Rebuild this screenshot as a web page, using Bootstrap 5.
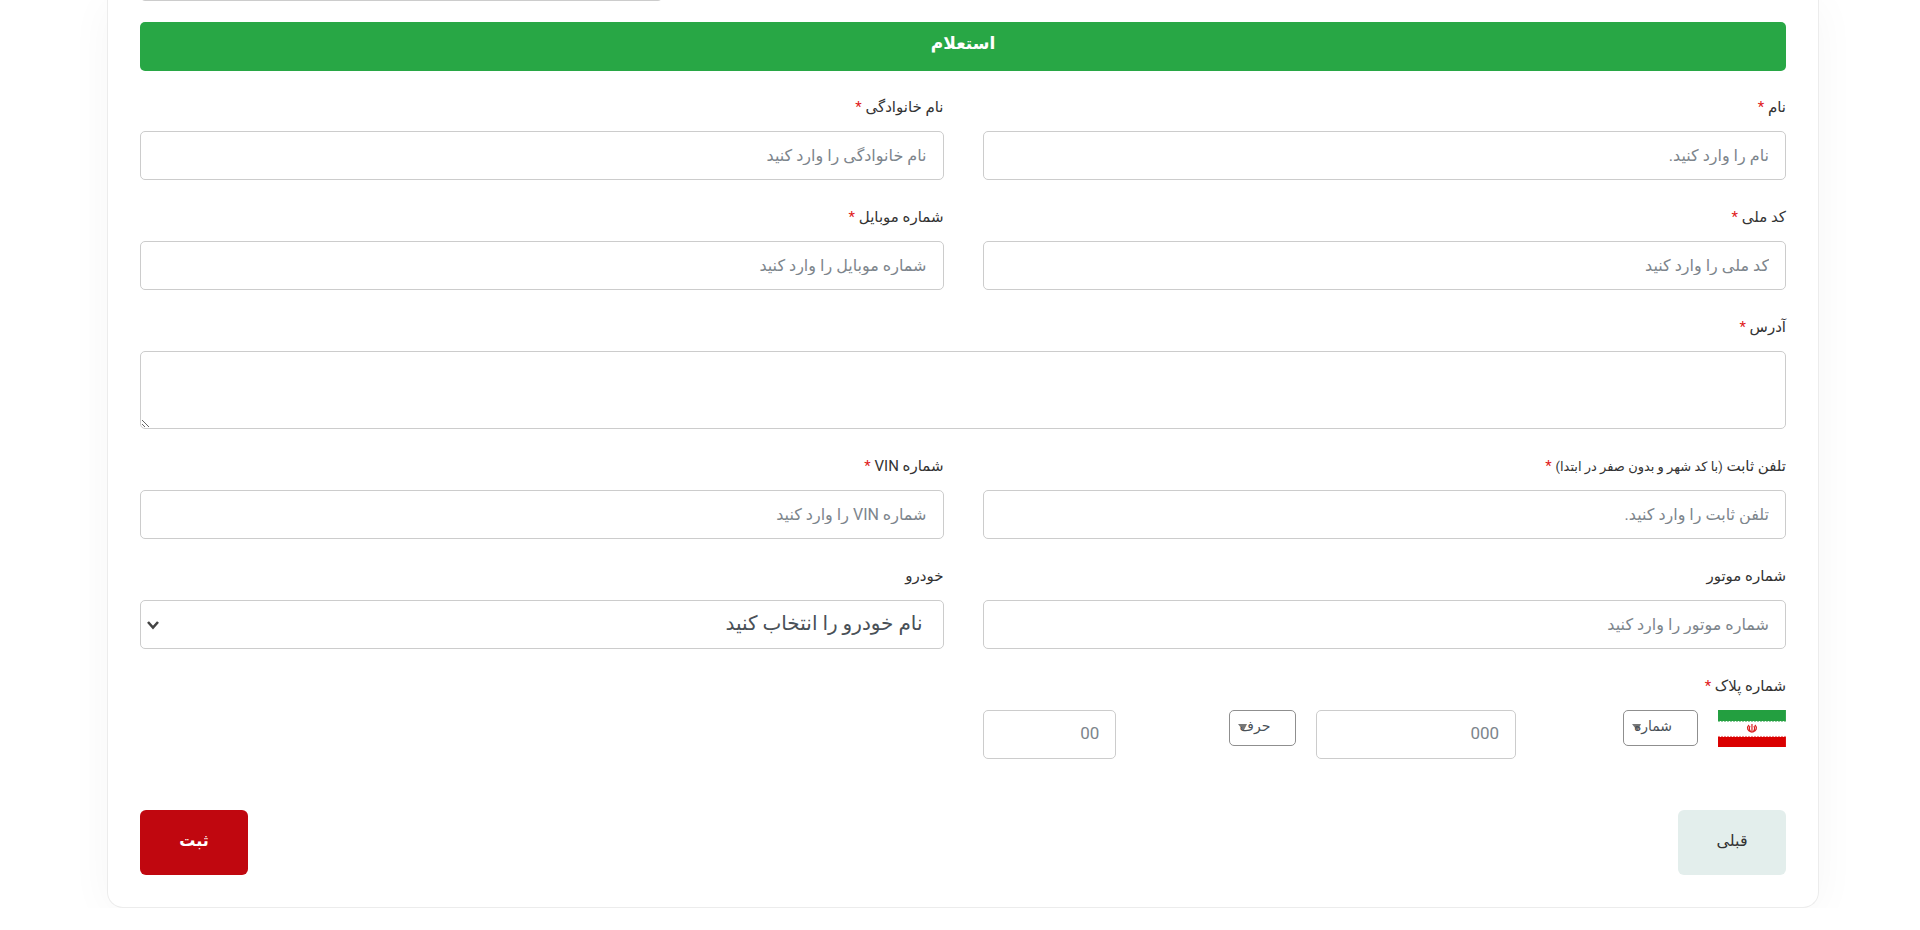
<!DOCTYPE html>
<html lang="fa" dir="rtl">
<head>
<meta charset="utf-8">
<meta name="viewport" content="width=device-width, initial-scale=1">
<title>ثبت اطلاعات خودرو</title>
<link href="https://cdn.jsdelivr.net/npm/bootstrap@5.3.0/dist/css/bootstrap.min.css" rel="stylesheet">
<style>
  body { font-family: Roboto, "DejaVu Sans", sans-serif; font-size: 15px; color: #333; background: #fff; }
  .page-wrap { padding: 0 101px 0 107px; }
  .form-panel { border: 1px solid #ececec; border-top: 0; border-radius: 0 0 16px 16px; padding: 0 32px 32px; background: #fff; box-shadow: 0 4px 44px rgba(0, 0, 0, .04); overflow: hidden; }
  .form-panel .row { --bs-gutter-x: 39px; }
  .field { margin-bottom: 24px; }
  .field-label { display: block; height: 37px; line-height: 26px; margin: 0; }
  .star { color: #e02020; }
  .note { font-size: 13px; }
  .form-control, .form-select { height: 49px; font-size: 16px; border: 1px solid #ccc; border-radius: 5px; padding: 6px 16px; color: #495057; }
  .form-control::placeholder { color: #7d858c; opacity: 1; }
  textarea.form-control { height: 78px; min-height: 78px; }
  .previous-field { height: 49px; margin-top: -48px; margin-bottom: 21px; }
  .btn-inquiry { height: 49px; background: #28a745; color: #fff; font-size: 17px; font-weight: 700; border: 0; border-radius: 5px; margin-bottom: 23px; padding-top: 4px; padding-bottom: 10px; }
  .car-select { font-size: 20px; line-height: 30px; padding: 0 20px 4px 32px; background-size: 16px 16px; background-position: left 4px center;
    background-image: url("data:image/svg+xml,%3Csvg xmlns='http://www.w3.org/2000/svg' viewBox='0 0 16 16'%3E%3Cpath d='M3 5l5 5.500 5-5.500' fill='none' stroke='%23444' stroke-width='2.600'/%3E%3C/svg%3E"); }
  .plate { display: grid; grid-template-columns: 68fr 162fr 200fr 160fr 134fr; column-gap: 20px; align-items: start; }
  .plate .form-control { font-size: 17px; padding-bottom: 10px; }
  .plate-select { width: 67px; height: 36px; font-size: 14px; border-color: #8f8f8f; padding: 0 25px 4px 4px; background-size: 9px 8px; background-position: left 8px center;
    background-image: url("data:image/svg+xml,%3Csvg xmlns='http://www.w3.org/2000/svg' viewBox='0 0 9 8'%3E%3Cpath d='M0 0h9L5.500 7z' fill='%23777'/%3E%3C/svg%3E"); }
  .plate-select.wide { width: 75px; }
  .flag { display: block; width: 100%; height: auto; }
  .actions { padding-top: 27px; }
  .btn-step { width: 108px; height: 65px; border: 0; border-radius: 6px; font-size: 16px; padding-bottom: 10px; }
  .btn-prev { background: #e3eeec; color: #333; }
  .btn-send { background: #c0070f; color: #fff; font-weight: 700; }
</style>
</head>
<body>
<main class="page-wrap">
  <form class="form-panel">
    <div class="row justify-content-end">
      <div class="col-4"><input type="text" class="form-control previous-field" aria-label="کد پیگیری"></div>
    </div>
    <button type="button" class="btn btn-inquiry w-100">استعلام</button>
    <div class="row">
      <div class="col-6 field">
        <label class="field-label" for="fname">نام <span class="star">*</span></label>
        <input id="fname" type="text" class="form-control" placeholder="نام را وارد کنید.">
      </div>
      <div class="col-6 field">
        <label class="field-label" for="lname">نام خانوادگی <span class="star">*</span></label>
        <input id="lname" type="text" class="form-control" placeholder="نام خانوادگی را وارد کنید">
      </div>
      <div class="col-6 field">
        <label class="field-label" for="nid">کد ملی <span class="star">*</span></label>
        <input id="nid" type="text" class="form-control" placeholder="کد ملی را وارد کنید">
      </div>
      <div class="col-6 field">
        <label class="field-label" for="mobile">شماره موبایل <span class="star">*</span></label>
        <input id="mobile" type="text" class="form-control" placeholder="شماره موبایل را وارد کنید">
      </div>
      <div class="col-12 field">
        <label class="field-label" for="address">آدرس <span class="star">*</span></label>
        <textarea id="address" class="form-control"></textarea>
      </div>
      <div class="col-6 field">
        <label class="field-label" for="phone">تلفن ثابت <span class="note">(با کد شهر و بدون صفر در ابتدا)</span> <span class="star">*</span></label>
        <input id="phone" type="text" class="form-control" placeholder="تلفن ثابت را وارد کنید.">
      </div>
      <div class="col-6 field">
        <label class="field-label" for="vin">شماره VIN <span class="star">*</span></label>
        <input id="vin" type="text" class="form-control" placeholder="شماره VIN را وارد کنید">
      </div>
      <div class="col-6 field">
        <label class="field-label" for="engine">شماره موتور</label>
        <input id="engine" type="text" class="form-control" placeholder="شماره موتور را وارد کنید">
      </div>
      <div class="col-6 field">
        <label class="field-label" for="car">خودرو</label>
        <select id="car" class="form-select car-select"><option>نام خودرو را انتخاب کنید</option></select>
      </div>
      <div class="col-6 field">
        <label class="field-label" for="plate3">شماره پلاک <span class="star">*</span></label>
        <div class="plate">
          <svg class="flag" viewBox="0 0 68 37" role="img" aria-label="ایران">
            <path fill="#fff" d="M0 0h68v37H0z"/>
            <path fill="#239f40" d="M0 0h68v11H0z"/>
            <path fill="#da0000" d="M0 27h68v10H0z"/>
            <path stroke="#8fcf9f" stroke-dasharray="2 1" d="M0 11.500h68"/>
            <path stroke="#ee8080" stroke-dasharray="2 1" d="M0 26.500h68"/>
            <g fill="none" stroke="#da2020" stroke-width="1.200"><path d="M34 14v9M31 15c-3 3-1 6 2 7M37 15c3 3 1 6-2 7M32 16c-1 2-1 4 1 6M36 16c1 2 1 4-1 6"/></g>
          </svg>
          <select class="form-select plate-select wide" aria-label="شماره"><option>شماره</option></select>
          <input id="plate3" type="text" class="form-control" placeholder="000">
          <select class="form-select plate-select" aria-label="حرف"><option>حرف</option></select>
          <input type="text" class="form-control" placeholder="00" aria-label="دو رقم پلاک">
        </div>
      </div>
    </div>
    <div class="actions d-flex justify-content-between">
      <button type="button" class="btn btn-step btn-prev">قبلی</button>
      <button type="submit" class="btn btn-step btn-send">ثبت</button>
    </div>
  </form>
</main>
<script src="https://cdn.jsdelivr.net/npm/bootstrap@5.3.0/dist/js/bootstrap.bundle.min.js"></script>
</body>
</html>
